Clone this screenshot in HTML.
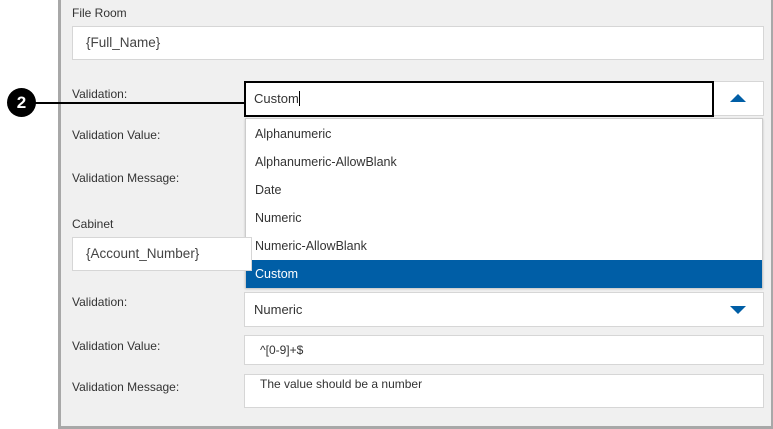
<!DOCTYPE html>
<html><head><style>
body{margin:0;width:773px;height:429px;background:#fff;position:relative;overflow:hidden;font-family:"Liberation Sans",sans-serif;color:#333}
.a{position:absolute}
.frame{left:58px;top:-3px;width:710px;height:426px;background:#f0f0f0;border:3px solid #a8a8a8}
.lbl{font-size:12px;color:#333}
.box{background:#fff;border:1px solid #d6d6d6;box-sizing:border-box}
.item{position:absolute;left:0;width:100%;height:28px;line-height:28px;padding-left:9px;font-size:12.5px;box-sizing:border-box}
</style></head><body>
<div class="a frame"></div>
<div class="a lbl" style="left:72px;top:6px">File Room</div>
<div class="a box" style="left:72px;top:26px;width:692px;height:34px;font-size:13.5px;line-height:32px;padding-left:13px;color:#444">{Full_Name}</div>
<div class="a lbl" style="left:72px;top:87px">Validation:</div>
<div class="a lbl" style="left:72px;top:128px">Validation Value:</div>
<div class="a lbl" style="left:72px;top:171px">Validation Message:</div>
<div class="a box" style="left:712px;top:81px;width:52px;height:35px"></div>
<svg class="a" style="left:729px;top:93px" width="18" height="10"><path d="M1 9 L9 1 L17 9 Z" fill="#005ea6"/></svg>
<div class="a" style="left:244px;top:81px;width:470px;height:36px;border:2px solid #000;background:#fff;box-sizing:border-box;font-size:13px;line-height:32px;padding-left:8px">Custom<span style="display:inline-block;width:1px;height:15px;background:#000;vertical-align:-3px"></span></div>
<div class="a" style="left:245px;top:118px;width:518px;height:170px;background:#fff;border:1px solid #ccc;box-sizing:border-box;box-shadow:0 1px 2px rgba(0,0,0,.2)">
<div class="item" style="top:1px">Alphanumeric</div>
<div class="item" style="top:29px">Alphanumeric-AllowBlank</div>
<div class="item" style="top:57px">Date</div>
<div class="item" style="top:85px">Numeric</div>
<div class="item" style="top:113px">Numeric-AllowBlank</div>
<div class="item" style="top:141px;background:#005ea6;color:#fff">Custom</div>
</div>
<div class="a lbl" style="left:72px;top:217px">Cabinet</div>
<div class="a box" style="left:72px;top:237px;width:180px;height:34px;font-size:13.5px;line-height:32px;padding-left:13px;color:#444">{Account_Number}</div>
<div class="a lbl" style="left:72px;top:295px">Validation:</div>
<div class="a box" style="left:244px;top:292px;width:520px;height:35px;font-size:13px;line-height:33px;padding-left:9px">Numeric</div>
<svg class="a" style="left:729px;top:305px" width="18" height="10"><path d="M1 1 L9 9 L17 1 Z" fill="#005ea6"/></svg>
<div class="a lbl" style="left:72px;top:339px">Validation Value:</div>
<div class="a box" style="left:244px;top:335px;width:520px;height:30px;font-size:12px;line-height:28px;padding-left:15px">^[0-9]+$</div>
<div class="a lbl" style="left:72px;top:380px">Validation Message:</div>
<div class="a box" style="left:244px;top:374px;width:520px;height:34px;font-size:12px;padding:2px 0 0 15px">The value should be a number</div>
<div class="a" style="left:35px;top:102px;width:210px;height:2px;background:#000"></div>
<div class="a" style="left:7px;top:88px;width:29px;height:29px;border-radius:50%;background:#000;color:#fff;font-weight:bold;font-size:17px;text-align:center;line-height:29px">2</div>
</body></html>
